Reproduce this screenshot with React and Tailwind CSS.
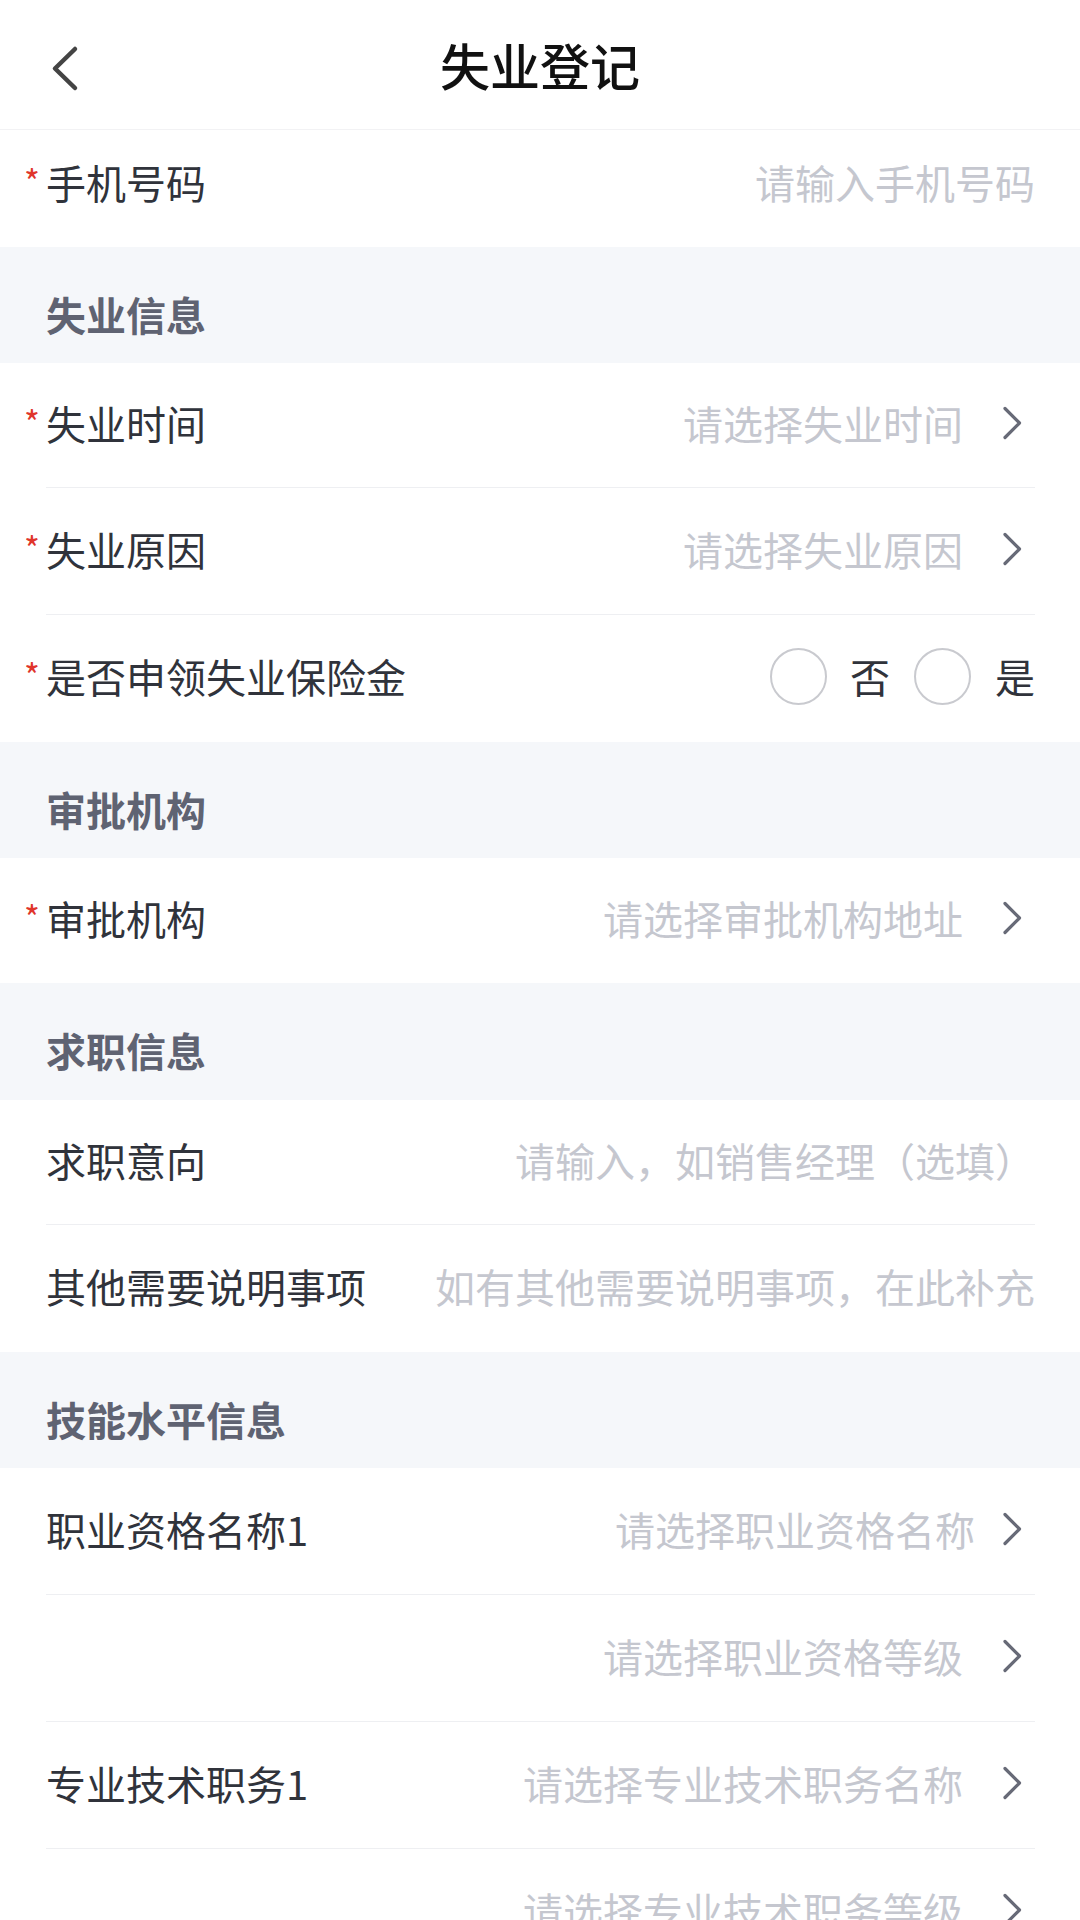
import React from 'react'

const Chevron = ({ ml = 'ml-[38px]' }) => (
  <svg width="22" height="36" viewBox="0 0 22 36" className={`${ml} mr-[12px] shrink-0`}>
    <path d="M4 3.5 L18.5 18 L4 32.5" fill="none" stroke="#676a77" strokeWidth="3.2" strokeLinecap="round" strokeLinejoin="round" />
  </svg>
)

const Star = ({ on }) => (
  <span className="w-[22px] shrink-0 mb-[2px] text-[34px] leading-none text-[#e0352b]">{on ? '*' : ''}</span>
)

function Section({ title, h = 'h-[116px]' }) {
  return (
    <div className={`flex items-center ${h} pt-[17px] pl-[46px] bg-[#f5f7fa]`}>
      <span className="text-[40px] leading-none font-bold text-[#5f6372]">{title}</span>
    </div>
  )
}

function Row({ h, required, label, placeholder, arrow, tight, pb = 'pb-[5px]' }) {
  return (
    <div className={`flex items-center ${h} ${pb} pl-[24px] pr-[45px] bg-white`}>
      <Star on={!!required} />
      <span className="text-[40px] leading-none text-[#30333b] whitespace-nowrap">{label}</span>
      <div className="ml-auto flex items-center">
        <span className="text-[40px] leading-none text-[#c5c7cf] whitespace-nowrap">{placeholder}</span>
        {arrow && <Chevron ml={tight ? 'ml-[26px]' : 'ml-[38px]'} />}
      </div>
    </div>
  )
}

const Line = () => <div className="h-px bg-[#eeeff2] ml-[46px] mr-[45px]" />

export default function App() {
  return (
    <div className="w-[1080px] h-[1920px] overflow-hidden bg-white font-['Noto_Sans_CJK_SC','Noto_Sans',sans-serif]">
      <div className="relative flex items-center justify-center h-[130px] pb-[2px] border-b border-[#f2f2f4]">
        <svg width="34" height="50" viewBox="0 0 34 50" className="absolute left-[48px] top-[43px]">
          <path d="M27 6 L7 25.5 L27 45" fill="none" stroke="#444444" strokeWidth="4.5" strokeLinecap="round" strokeLinejoin="round" />
        </svg>
        <span className="text-[50px] leading-none font-medium text-[#111111]">失业登记</span>
      </div>

      <Row h="h-[117px]" pb="pb-[13px]" required label="手机号码" placeholder="请输入手机号码" />

      <Section title="失业信息" />
      <div className="bg-white">
        <Row h="h-[124px]" required label="失业时间" placeholder="请选择失业时间" arrow />
        <Line />
        <Row h="h-[126px]" required label="失业原因" placeholder="请选择失业原因" arrow />
        <Line />
        <div className="flex items-center h-[127px] pb-[5px] pl-[24px] pr-[45px]">
          <Star on />
          <span className="text-[40px] leading-none text-[#30333b]">是否申领失业保险金</span>
          <div className="ml-auto flex items-center">
            <span className="w-[57px] h-[57px] rounded-full border-2 border-[#c9cacf]" />
            <span className="ml-[23px] text-[40px] leading-none text-[#30333b]">否</span>
            <span className="ml-[24px] w-[57px] h-[57px] rounded-full border-2 border-[#c9cacf]" />
            <span className="ml-[24px] text-[40px] leading-none text-[#30333b]">是</span>
          </div>
        </div>
      </div>

      <Section title="审批机构" />
      <Row h="h-[125px]" required label="审批机构" placeholder="请选择审批机构地址" arrow />

      <Section title="求职信息" h="h-[117px]" />
      <div className="bg-white">
        <Row h="h-[124px]" label="求职意向" placeholder="请输入，如销售经理（选填）" />
        <Line />
        <Row h="h-[127px]" label="其他需要说明事项" placeholder="如有其他需要说明事项，在此补充" />
      </div>

      <Section title="技能水平信息" />
      <div className="bg-white">
        <Row h="h-[126px]" label="职业资格名称1" placeholder="请选择职业资格名称" arrow tight />
        <Line />
        <Row h="h-[126px]" label="" placeholder="请选择职业资格等级" arrow />
        <Line />
        <Row h="h-[126px]" label="专业技术职务1" placeholder="请选择专业技术职务名称" arrow />
        <Line />
        <Row h="h-[126px]" label="" placeholder="请选择专业技术职务等级" arrow />
      </div>
    </div>
  )
}
